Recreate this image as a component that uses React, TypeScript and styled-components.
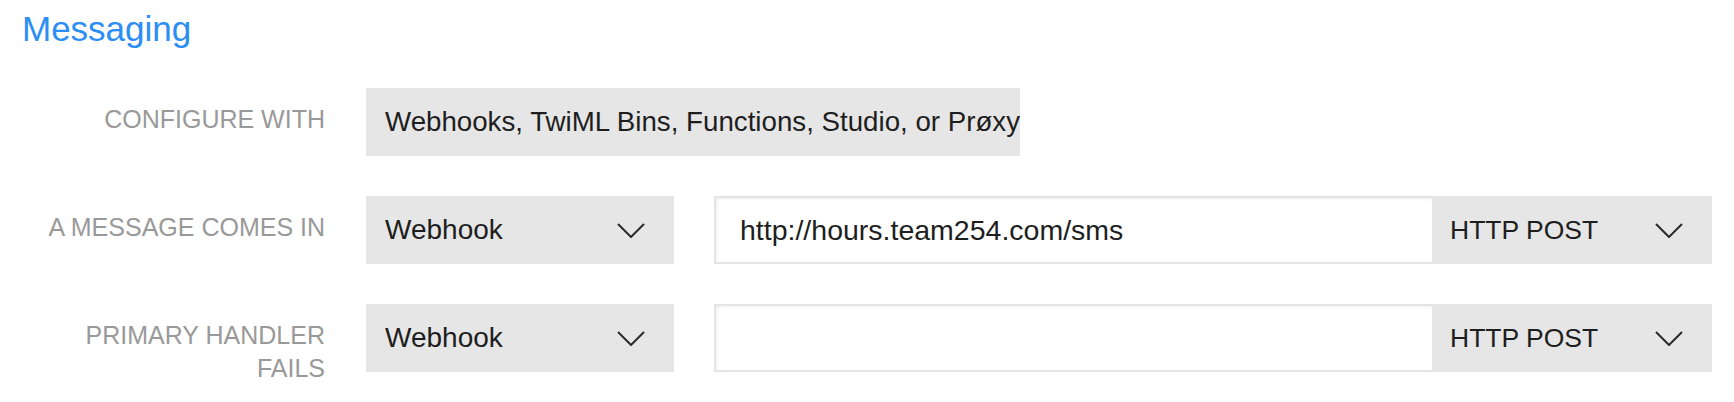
import React from "react";
import styled, { createGlobalStyle } from "styled-components";

const GlobalStyle = createGlobalStyle`
  html, body { margin: 0; padding: 0; background: #ffffff; }
  body { font-family: "Liberation Sans", Arial, Helvetica, sans-serif; }
`;

const Page = styled.div`
  width: 1734px;
  height: 402px;
  overflow: hidden;
  background: #fff;
`;

const Title = styled.h2`
  margin: 0;
  padding: 7px 0 0 22px;
  font-size: 35px;
  line-height: 44px;
  font-weight: 400;
  color: #2b8ef4;
`;

const Form = styled.div`
  display: flex;
  flex-direction: column;
  gap: 40px;
  margin-top: 37px;
`;

const Row = styled.div`
  display: grid;
  grid-template-columns: 325px auto;
  column-gap: 41px;
  align-items: start;
`;

const Label = styled.div`
  text-align: right;
  text-transform: uppercase;
  font-size: 25px;
  line-height: 33px;
  color: #999999;
  padding-top: 15px;
`;

const Controls = styled.div`
  display: flex;
  gap: 40px;
  align-items: stretch;
`;

const GrayBox = styled.div<{ $width: number; $pad?: number; $size?: number }>`
  box-sizing: border-box;
  width: ${(p) => p.$width}px;
  height: 68px;
  background: #e6e6e6;
  display: flex;
  align-items: center;
  justify-content: space-between;
  padding: 0 29px 0 ${(p) => p.$pad ?? 19}px;
  font-size: ${(p) => p.$size ?? 28}px;
  color: #1e1e1e;
  white-space: nowrap;
  overflow: hidden;
`;

const StaticBox = styled(GrayBox)`
  padding-right: 0;
`;

const InputGroup = styled.div`
  display: flex;
  width: 998px;
  height: 68px;
`;

const UrlInput = styled.div`
  box-sizing: border-box;
  flex: 1;
  height: 68px;
  border: 2px solid #e4e4e4;
  border-right: none;
  box-shadow: inset 0 3px 4px -2px rgba(0, 0, 0, 0.06), inset 3px 0 4px -2px rgba(0, 0, 0, 0.05);
  background: #fff;
  display: flex;
  align-items: center;
  padding-left: 24px;
  font-size: 28.5px;
  color: #1e1e1e;
`;

const ChevronSvg = styled.svg`
  flex: none;
  width: 28px;
  height: 15px;
`;

const Chevron = () => (
  <ChevronSvg viewBox="0 0 28 15" fill="none">
    <path d="M1 1 L14 14 L27 1" stroke="#2a2a2a" strokeWidth="2" />
  </ChevronSvg>
);

const Select = ({ value, width, pad, size }: { value: string; width: number; pad?: number; size?: number }) => (
  <GrayBox $width={width} $pad={pad} $size={size}>
    <span>{value}</span>
    <Chevron />
  </GrayBox>
);

export default function App() {
  return (
    <Page>
      <GlobalStyle />
      <Title>Messaging</Title>
      <Form>
        <Row>
          <Label>Configure with</Label>
          <Controls>
            <StaticBox $width={654} $size={27.7}>
              Webhooks, TwiML Bins, Functions, Studio, or Prøxy
            </StaticBox>
          </Controls>
        </Row>
        <Row>
          <Label>A message comes in</Label>
          <Controls>
            <Select value="Webhook" width={308} />
            <InputGroup>
              <UrlInput>http://hours.team254.com/sms</UrlInput>
              <Select value="HTTP POST" width={280} pad={18} size={26.5} />
            </InputGroup>
          </Controls>
        </Row>
        <Row>
          <Label>
            Primary handler
            <br />
            fails
          </Label>
          <Controls>
            <Select value="Webhook" width={308} />
            <InputGroup>
              <UrlInput />
              <Select value="HTTP POST" width={280} pad={18} size={26.5} />
            </InputGroup>
          </Controls>
        </Row>
      </Form>
    </Page>
  );
}
